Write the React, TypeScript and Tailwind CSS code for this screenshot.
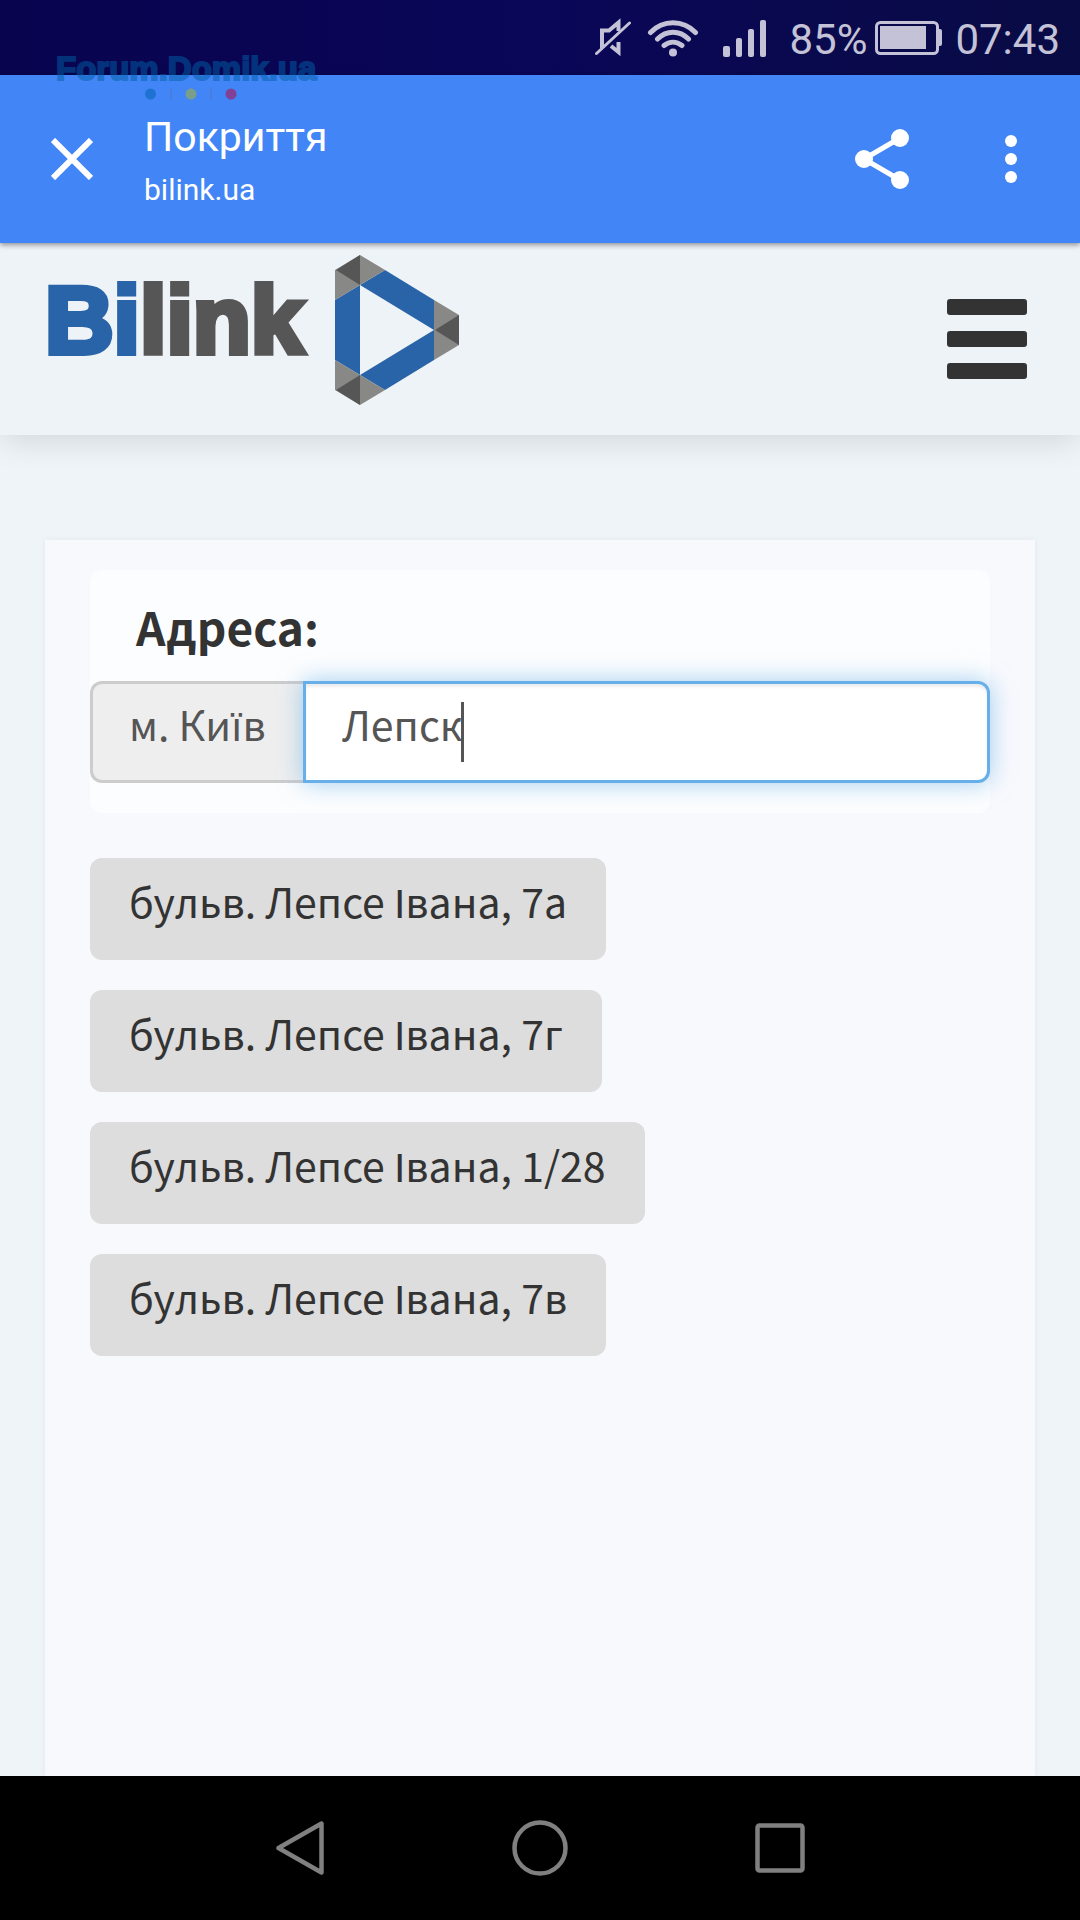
import { useState } from 'react';

const addresses = [
  'бульв. Лепсе Івана, 7а',
  'бульв. Лепсе Івана, 7г',
  'бульв. Лепсе Івана, 1/28',
  'бульв. Лепсе Івана, 7в',
];

const StatusBar = () => (
  <div className="flex h-[75px] items-center justify-end bg-linear-to-r from-[#08044e] via-[#0a0658] to-[#090b44] pr-5 text-[42px] leading-[48px] text-[#c4c2d6]">
    <svg width="36" height="40" viewBox="0 0 36 40" fill="none" stroke="currentColor" className="mr-4">
      <path d="M7 30V12.500H14L23.500 4.500V13M23.500 24V34L16 28" strokeWidth="4" />
      <path d="M1.500 35.500L34.500 5" strokeWidth="3" strokeLinecap="round" />
    </svg>
    <svg width="52" height="40" viewBox="0 0 52 40" fill="none" stroke="currentColor" strokeWidth="5" strokeLinecap="round" className="mr-6">
      <path d="M3.500 14.500C16 1.500 36 1.500 48.500 14.500M10.500 21C19.500 12 32.500 12 41.500 21M17 27.500C22.500 23 29.500 23 35 27.500" />
      <circle cx="26" cy="34.500" r="4" fill="currentColor" stroke="none" />
    </svg>
    <svg width="44" height="40" viewBox="0 0 44 40" fill="currentColor" className="mr-[22px]">
      <rect x="0" y="28" width="7" height="11" rx="2" />
      <rect x="13" y="20" width="6" height="19" rx="2" />
      <rect x="25" y="11" width="6" height="28" rx="2" />
      <rect x="37" y="2" width="6" height="37" rx="2" />
    </svg>
    <span className="pt-1">85%</span>
    <svg width="68" height="34" viewBox="0 0 68 34" className="mr-3 ml-2">
      <rect x="1.500" y="1.500" width="61" height="31" rx="4" fill="none" stroke="currentColor" strokeWidth="3" />
      <rect x="5" y="5" width="46" height="23" fill="currentColor" />
      <path d="M63 8h2a2 2 0 0 1 2 2v13a2 2 0 0 1-2 2h-2z" fill="currentColor" />
    </svg>
    <span className="pt-1">07:43</span>
  </div>
);

const Watermark = () => (
  <div className="pointer-events-none absolute top-[50px] left-[56px] z-30 opacity-50">
    <span className="block font-['Liberation_Sans',sans-serif] text-[33px] leading-[38px] font-bold text-[#0060a8] [-webkit-text-stroke:2px_#0060a8]">
      Forum.Domik.ua
    </span>
    <svg width="92" height="14" viewBox="0 0 92 14" className="ml-[89px]">
      <circle cx="5.500" cy="6" r="5.500" fill="#0060b0" />
      <path d="M26 0v12M66 0v12" stroke="#5a6a98" />
      <circle cx="46" cy="6" r="5.500" fill="#b0b820" />
      <circle cx="86" cy="6" r="5.500" fill="#c00038" />
    </svg>
  </div>
);

const Toolbar = () => (
  <div className="relative z-20 flex h-[168px] items-center bg-[#4285f6] pr-[63px] pl-[51px] text-white shadow-[0_2px_5px_rgba(0,0,0,0.4)]">
    <button aria-label="Закрити" className="mr-[51px]">
      <svg width="42" height="42" viewBox="0 0 42 42" stroke="currentColor" strokeWidth="6">
        <path d="M2 2L40 40M40 2L2 40" />
      </svg>
    </button>
    <div className="flex-1 pt-1.5">
      <h1 className="text-[41px] leading-[46px]">Покриття</h1>
      <p className="mt-2.5 text-[30px] leading-[40px]">bilink.ua</p>
    </div>
    <button aria-label="Поділитися" className="mr-24">
      <svg width="54" height="60" viewBox="0 0 54 60" fill="currentColor">
        <path d="M45 9L9 30L45 51" fill="none" stroke="currentColor" strokeWidth="5" />
        <circle cx="45" cy="9" r="9" />
        <circle cx="9" cy="30" r="9" />
        <circle cx="45" cy="51" r="9" />
      </svg>
    </button>
    <button aria-label="Меню браузера">
      <svg width="12" height="48" viewBox="0 0 12 48" fill="currentColor">
        <circle cx="6" cy="6" r="6" />
        <circle cx="6" cy="24" r="6" />
        <circle cx="6" cy="42" r="6" />
      </svg>
    </button>
  </div>
);

const Logo = () => (
  <a href="#" aria-label="Bilink" className="flex items-start">
    <span className="mt-5 w-[290px] font-['Liberation_Sans',sans-serif] text-[95px] leading-[90px] font-bold text-[#565656] [-webkit-text-stroke:6px_#565656]">
      <span className="text-[#2a64a8] [-webkit-text-stroke:6px_#2a64a8]">Bi</span>link
    </span>
    <svg width="124" height="150" viewBox="0 0 124 150">
      <path d="M0 45L25 30V120L0 105zM25 30L50 15L99 45V75zM25 120L99 75V105L50 135z" fill="#2a64a8" />
      <path d="M25 0L50 15L25 30L0 45V15zM99 45L124 60V90L99 105zM0 105L25 120L50 135L25 150L0 135z" fill="#888886" />
      <path d="M25 0V30L1 15zM124 60V90L100 75zM25 120V150L1 135z" fill="#565656" />
    </svg>
  </a>
);

const SiteHeader = () => (
  <header className="relative z-10 flex h-48 items-start justify-between bg-[#eef3f8] pt-3 pr-[53px] pl-[45px] shadow-[0_8px_30px_-2px_rgba(0,0,0,0.12)]">
    <Logo />
    <button aria-label="Меню" className="mt-11 flex w-20 flex-col gap-4">
      <span className="h-4 rounded-[3px] bg-[#333]" />
      <span className="h-4 rounded-[3px] bg-[#333]" />
      <span className="h-4 rounded-[3px] bg-[#333]" />
    </button>
  </header>
);

const AddressForm = ({ value, onChange }) => (
  <form className="rounded-xl bg-[#fcfdfe] pt-[26px] pb-[30px]">
    <label htmlFor="address" className="block pl-[46px] text-[46px] leading-[60px] font-bold">
      Адреса:
    </label>
    <div className="mt-[25px] flex h-[102px]">
      <span className="w-[213px] rounded-l-xl border-[3px] border-r-0 border-[#ccc] bg-[#eee] pt-[9px] pl-9 text-[41px] leading-[60px] text-[#555]">
        м. Київ
      </span>
      <div className="relative flex-1">
        <input
          id="address"
          type="text"
          value={value}
          onChange={(e) => onChange(e.target.value)}
          className="h-full w-full rounded-r-xl border-[3px] border-[#66afe9] bg-white pb-[18px] pl-9 text-[41px] leading-[60px] text-[#555] caret-transparent shadow-[inset_0_3px_3px_rgba(0,0,0,0.075),0_0_24px_rgba(102,175,233,0.6)] outline-none"
        />
        <span className="absolute top-[21px] left-[158px] h-[60px] w-[3px] bg-[#555]" />
      </div>
    </div>
  </form>
);

export default function App() {
  const [address, setAddress] = useState('Лепск');

  return (
    <div className="relative flex min-h-screen flex-col bg-[#eef4f8] font-['Roboto',sans-serif]">
      <StatusBar />
      <Toolbar />
      <Watermark />
      <SiteHeader />

      <main className="mx-[45px] mt-[105px] flex-1 bg-[#f8f9fd] px-[45px] py-[30px] font-['Noto_Sans_CJK_JP',sans-serif] text-[#333] shadow-[0_0_6px_rgba(0,0,0,0.06)]">
        <AddressForm value={address} onChange={setAddress} />
        <ul className="mt-[45px] flex flex-col items-start gap-[30px]">
          {addresses.map((item) => (
            <li key={item}>
              <button
                type="button"
                onClick={() => setAddress(item)}
                className="block h-[102px] rounded-xl bg-[#ddd] px-[39px] pb-[18px] text-[41px] leading-[60px]"
              >
                {item}
              </button>
            </li>
          ))}
        </ul>
      </main>

      <nav className="relative z-10 flex h-36 items-center justify-center bg-black text-[#808080]">
        <button aria-label="Назад" className="flex w-60 justify-center">
          <svg width="48" height="56" viewBox="0 0 48 56" fill="none" stroke="currentColor" strokeWidth="4.500" strokeLinejoin="round">
            <path d="M45.500 3.500V52.500L2.500 28z" />
          </svg>
        </button>
        <button aria-label="Головний екран" className="flex w-60 justify-center">
          <svg width="56" height="56" viewBox="0 0 56 56" fill="none" stroke="currentColor" strokeWidth="4.500">
            <circle cx="28" cy="28" r="25.500" />
          </svg>
        </button>
        <button aria-label="Останні програми" className="flex w-60 justify-center">
          <svg width="50" height="50" viewBox="0 0 50 50" fill="none" stroke="currentColor" strokeWidth="4.500">
            <rect x="2.500" y="2.500" width="45" height="45" rx="2" />
          </svg>
        </button>
      </nav>
    </div>
  );
}
